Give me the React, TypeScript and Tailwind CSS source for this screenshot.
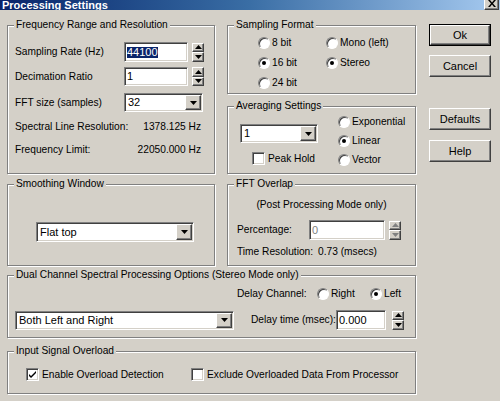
import type { ReactNode } from "react";

const sunken =
  "border border-t-[#808080] border-l-[#808080] border-b-white border-r-white shadow-[inset_1px_1px_#404040,inset_-1px_-1px_#d4d0c8]";
const raised =
  "border border-t-white border-l-white border-b-[#404040] border-r-[#404040] shadow-[inset_-1px_-1px_#808080] bg-[#d4d0c8]";

function GroupBox({ title, className, children }: { title: string; className: string; children: ReactNode }) {
  return (
    <div className={`relative border border-[#808080] shadow-[inset_1px_1px_#fff,1px_1px_#fff] ${className}`}>
      <span className="absolute -top-[7px] left-[6px] whitespace-nowrap bg-[#d4d0c8] px-[2px] leading-[12px]">{title}</span>
      {children}
    </div>
  );
}

function Arrow({ dir, muted }: { dir: "up" | "down"; muted?: boolean }) {
  const fill = muted ? "#808080" : "#000";
  return (
    <svg width="7" height="4" viewBox="0 0 7 4">
      {dir === "up" ? <path d="M3.5 0 L7 4 L0 4 Z" fill={fill} /> : <path d="M0 0 L7 0 L3.5 4 Z" fill={fill} />}
    </svg>
  );
}

function Spin({ muted }: { muted?: boolean }) {
  return (
    <div className="flex h-[19px] w-[12px] flex-col">
      <div className={`flex h-1/2 items-center justify-center ${raised}`}>
        <Arrow dir="up" muted={muted} />
      </div>
      <div className={`flex h-1/2 items-center justify-center ${raised}`}>
        <Arrow dir="down" muted={muted} />
      </div>
    </div>
  );
}

function Field({ className, children }: { className: string; children?: ReactNode }) {
  return (
    <div className={`flex items-center bg-white pl-[2px] text-[11px] leading-none ${sunken} ${className}`}>
      {children}
    </div>
  );
}

function Combo({ value, className }: { value: string; className: string }) {
  return (
    <div className={`flex items-center bg-white p-[1px] text-[11px] leading-none ${sunken} ${className}`}>
      <span className="flex-1 pl-[2px]">{value}</span>
      <div className={`flex h-full w-[16px] items-center justify-center ${raised}`}>
        <Arrow dir="down" />
      </div>
    </div>
  );
}

function Radio({ label, checked, className = "" }: { label: string; checked?: boolean; className?: string }) {
  return (
    <div className={`flex h-[12px] items-center gap-[2px] whitespace-nowrap ${className}`}>
      <span className="flex h-[12px] w-[12px] items-center justify-center rounded-full border border-t-[#808080] border-l-[#808080] border-b-white border-r-white bg-white shadow-[inset_1px_1px_#404040]">
        {checked ? <span className="h-[4px] w-[4px] rounded-full bg-black" /> : null}
      </span>
      <span>{label}</span>
    </div>
  );
}

function Check({ label, checked, className = "" }: { label: string; checked?: boolean; className?: string }) {
  return (
    <div className={`flex h-[13px] items-center gap-[3px] whitespace-nowrap ${className}`}>
      <span className={`flex h-[13px] w-[13px] items-center justify-center bg-white ${sunken}`}>
        {checked ? (
          <svg width="7" height="7" viewBox="0 0 7 7">
            <path d="M0 3 L2 5 L7 0 L7 2 L2 7 L0 5 Z" fill="#000" />
          </svg>
        ) : null}
      </span>
      <span>{label}</span>
    </div>
  );
}

function Button({ label, isDefault, className }: { label: string; isDefault?: boolean; className: string }) {
  return (
    <div className={`h-[22px] w-[62px] ${isDefault ? "border border-black" : ""} ${className}`}>
      <div className={`flex h-full w-full items-center justify-center text-[11px] ${raised}`}>{label}</div>
    </div>
  );
}

export default function App() {
  return (
    <div className="h-[401px] w-[500px] overflow-hidden bg-[#d4d0c8] font-['Liberation_Sans',Arial,sans-serif] text-[10.2px] leading-[12px] text-black">
      {/* title bar, the window's top edge is off screen */}
      <div className="flex h-[10px] items-end justify-between overflow-hidden bg-gradient-to-r from-[#0a246a] via-[#3a6ea5] to-[#a6caf0]">
        <span className="-mb-[1px] pl-[2px] text-[11px] font-bold leading-[11px] text-white">Processing Settings</span>
        <div className={`mr-[1px] flex h-[12px] w-[15px] items-end justify-center pb-[2px] ${raised}`}>
          <svg width="8" height="7" viewBox="0 0 8 7">
            <path d="M0 0 L2 0 L4 2.5 L6 0 L8 0 L5 3.5 L8 7 L6 7 L4 4.5 L2 7 L0 7 L3 3.5 Z" fill="#000" />
          </svg>
        </div>
      </div>

      <div className="flex pl-[7px] pt-[15px]">
        <div className="flex w-[409px] flex-col">
          <div className="flex gap-[12px]">
            <GroupBox title="Frequency Range and Resolution" className="h-[149px] w-[208px] pl-[7px] pt-[16px]">
              <div className="flex h-[20px] items-center">
                <span className="w-[109px]">Sampling Rate (Hz)</span>
                <Field className="h-[20px] w-[64px]">
                  <span className="bg-[#0a246a] text-white">44100</span>
                </Field>
                <div className="ml-[4px]">
                  <Spin />
                </div>
              </div>
              <div className="mt-[5px] flex h-[19px] items-center">
                <span className="w-[109px]">Decimation Ratio</span>
                <Field className="h-[19px] w-[64px]">1</Field>
                <div className="ml-[4px]">
                  <Spin />
                </div>
              </div>
              <div className="mt-[7px] flex h-[19px] items-center">
                <span className="w-[109px]">FFT size (samples)</span>
                <Combo value="32" className="h-[19px] w-[79px]" />
              </div>
              <div className="mt-[9px] flex w-[186px] justify-between">
                <span>Spectral Line Resolution:</span>
                <span>1378.125 Hz</span>
              </div>
              <div className="mt-[11px] flex w-[186px] justify-between">
                <span>Frequency Limit:</span>
                <span>22050.000 Hz</span>
              </div>
            </GroupBox>

            <div className="flex w-[189px] flex-col">
              <GroupBox title="Sampling Format" className="h-[69px] pl-[30px] pt-[11px]">
                <div className="grid grid-cols-[68px_auto] gap-y-[8px]">
                  <Radio label="8 bit" />
                  <Radio label="Mono (left)" />
                  <Radio label="16 bit" checked />
                  <Radio label="Stereo" checked />
                  <Radio label="24 bit" />
                </div>
              </GroupBox>

              <GroupBox title="Averaging Settings" className="mt-[12px] flex h-[68px] pl-[12px]">
                <div className="flex flex-col pt-[17px]">
                  <Combo value="1" className="h-[19px] w-[78px]" />
                  <Check label="Peak Hold" className="ml-[12px] mt-[9px]" />
                </div>
                <div className="ml-[20px] flex flex-col gap-[7px] pt-[9px]">
                  <Radio label="Exponential" />
                  <Radio label="Linear" checked />
                  <Radio label="Vector" />
                </div>
              </GroupBox>
            </div>
          </div>

          <div className="mt-[10px] flex gap-[12px]">
            <GroupBox title="Smoothing Window" className="h-[82px] w-[208px] pl-[28px] pt-[37px]">
              <Combo value="Flat top" className="h-[20px] w-[158px]" />
            </GroupBox>

            <GroupBox title="FFT Overlap" className="h-[82px] w-[189px] pt-[14px]">
              <p className="text-center">(Post Processing Mode only)</p>
              <div className="mt-[9px] flex h-[20px] items-center pl-[9px]">
                <span className="w-[72px]">Percentage:</span>
                <Field className="h-[20px] w-[76px] text-[#808080]">0</Field>
                <div className="ml-[4px]">
                  <Spin muted />
                </div>
              </div>
              <div className="mt-[6px] flex pl-[9px]">
                <span>Time Resolution:</span>
                <span className="ml-[5px]">0.73 (msecs)</span>
              </div>
            </GroupBox>
          </div>

          <GroupBox title="Dual Channel Spectral Processing Options (Stereo Mode only)" className="mt-[9px] h-[63px] pt-[12px]">
            <div className="ml-[229px] flex">
              <span className="w-[80px] whitespace-nowrap">Delay Channel:</span>
              <Radio label="Right" className="w-[53px]" />
              <Radio label="Left" checked />
            </div>
            <div className="mt-[10px] flex h-[20px] items-center pl-[7px]">
              <Combo value="Both Left and Right" className="h-[19px] w-[219px]" />
              <span className="ml-[17px] w-[85px] whitespace-nowrap">Delay time (msec):</span>
              <Field className="h-[20px] w-[50px]">0.000</Field>
              <div className="ml-[6px]">
                <Spin />
              </div>
            </div>
          </GroupBox>

          <GroupBox title="Input Signal Overload" className="mt-[13px] flex h-[43px] pl-[18px] pt-[16px]">
            <Check label="Enable Overload Detection" checked className="w-[165px]" />
            <Check label="Exclude Overloaded Data From Processor" />
          </GroupBox>
        </div>

        <div className="-mt-[1px] ml-[13px] flex flex-col">
          <Button label="Ok" isDefault className="" />
          <Button label="Cancel" className="mt-[9px]" />
          <Button label="Defaults" className="mt-[31px]" />
          <Button label="Help" className="mt-[10px]" />
        </div>
      </div>
    </div>
  );
}
